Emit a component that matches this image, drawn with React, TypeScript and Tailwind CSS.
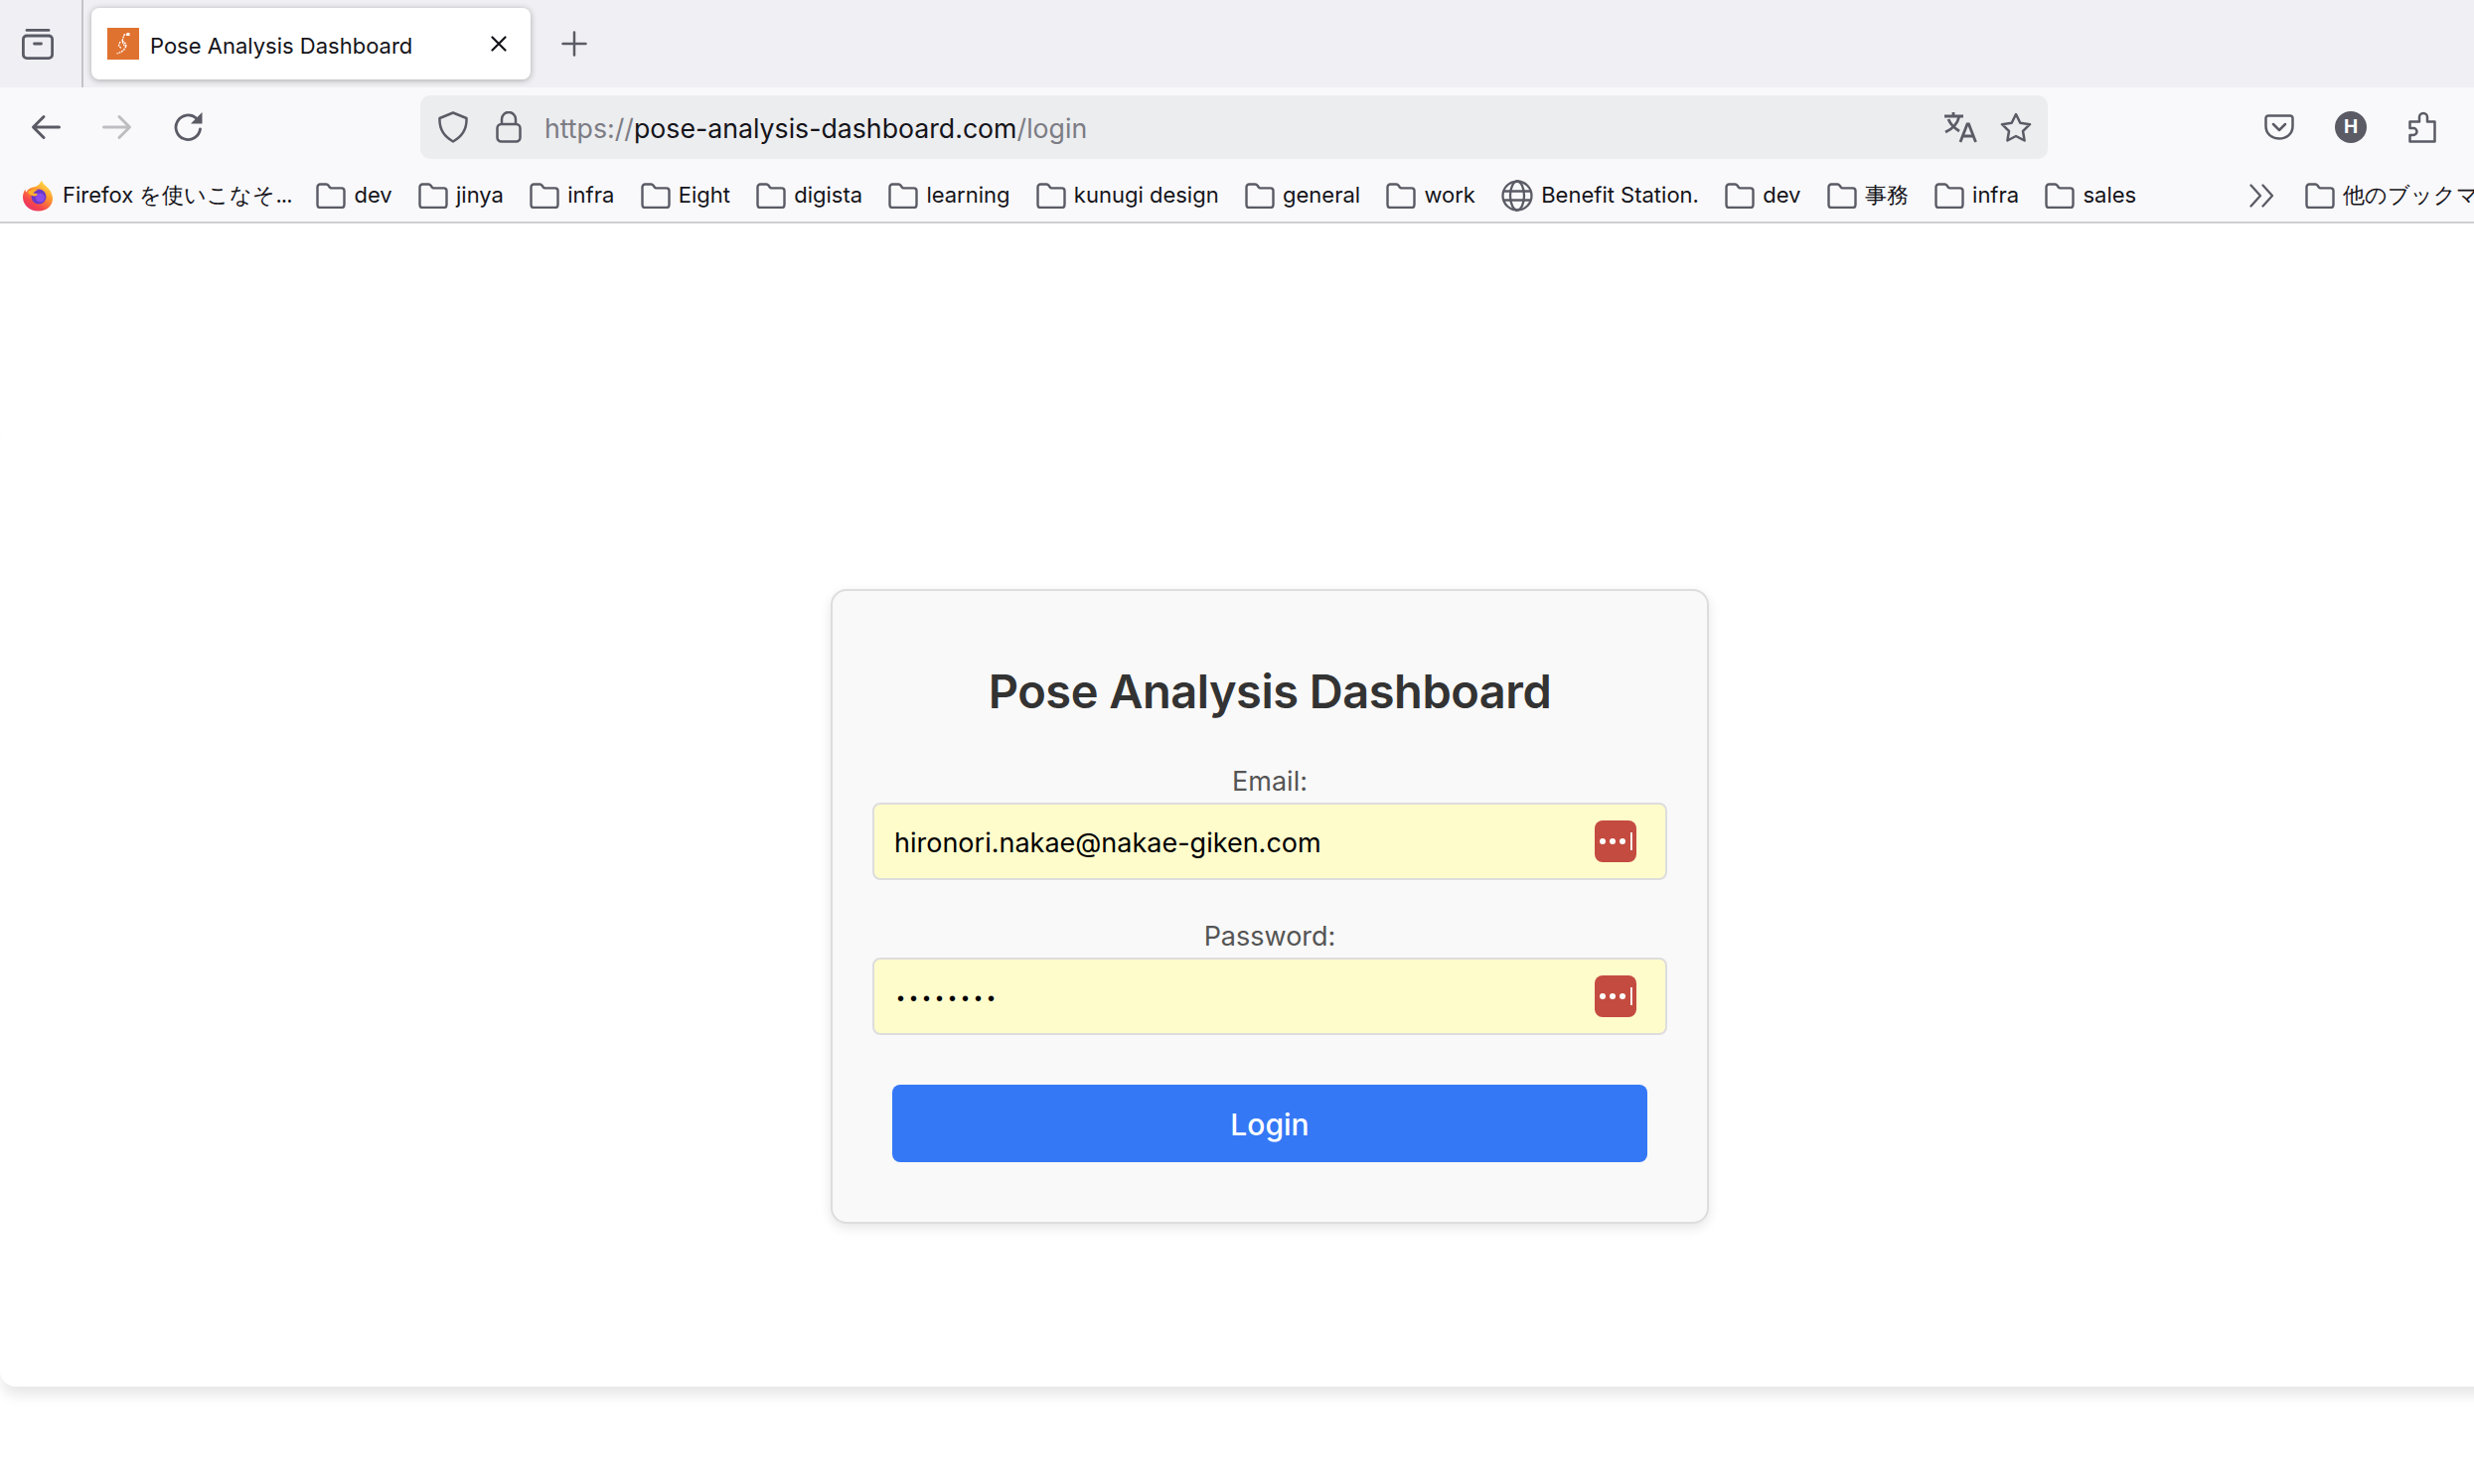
import React from 'react';

const bookmarks = ['dev', 'jinya', 'infra', 'Eight', 'digista', 'learning', 'kunugi design', 'general', 'work'];
const bookmarksAfter = ['dev', '事務', 'infra', 'sales'];

const Folder: React.FC = () => (
  <svg width="30" height="26" viewBox="0 0 30 26" fill="none" stroke="#5b5b66" strokeWidth="2.4" strokeLinejoin="round" className="shrink-0">
    <path d="M1.5 4.2a2.7 2.7 0 0 1 2.7-2.7h6.2c1 0 1.6.5 2.2 1.3l1.2 1.7c.4.6 1 .9 1.7.9h10.300a2.700 2.700 0 0 1 2.700 2.700v14.200a2.700 2.700 0 0 1-2.700 2.700H4.200a2.700 2.700 0 0 1-2.700-2.700z" />
  </svg>
);

const Bookmark: React.FC<{ label: string }> = ({ label }) => (
  <div className="flex items-center gap-[8px]">
    <Folder />
    <span className="whitespace-nowrap">{label}</span>
  </div>
);

const FirefoxLogo: React.FC = () => (
  <svg width="32" height="32" viewBox="0 0 32 32" className="shrink-0">
    <defs>
      <linearGradient id="fx" x1="0.8" y1="0.05" x2="0.2" y2="1">
        <stop offset="0" stopColor="#ffe14d" />
        <stop offset="0.35" stopColor="#ff9a2e" />
        <stop offset="0.75" stopColor="#f5424d" />
        <stop offset="1" stopColor="#e6326e" />
      </linearGradient>
    </defs>
    <path d="M20 1c1 3 4 4.500 6.500 7.500 1.200 1.500 2.500 2.500 2.500 3.500 1.500 3 2 5 2 7 0 7-6 12.500-14.500 12.500C8 31.500 1 25.500 1 17.500c0-3 1-6 2.500-8 0 1.500.5 2.500 1 3 1-2.500 3.500-4.500 6.500-5 3-.5 7-2 8.500-6.500z" fill="url(#fx)" />
    <circle cx="17" cy="17" r="7.500" fill="#6a37c9" />
    <path d="M6 12c3-2 7-2.500 10-1.500-2.500.5-3.500 1.500-4.500 3 3 .5 6 .5 7 .5-1.500 2-5 3-8 2-2.500-.7-4-2-4.500-4z" fill="#ffb02e" />
    <circle cx="18.500" cy="18" r="4.500" fill="#8b4be8" />
  </svg>
);

const KeyIcon: React.FC = () => (
  <svg width="42" height="42" viewBox="0 0 42 42" className="absolute right-[31px] top-[18px]">
    <rect width="42" height="42" rx="8" fill="#c44b3f" />
    <circle cx="8" cy="21" r="3" fill="#fff" />
    <circle cx="18" cy="21" r="3" fill="#fff" />
    <circle cx="28" cy="21" r="3" fill="#fff" />
    <rect x="36" y="12" width="1.800" height="18" fill="#fff" />
  </svg>
);

export default function App() {
  return (
    <div className="w-[2490px] h-[1494px] overflow-hidden bg-white font-['Inter',sans-serif]">
      {/* Tab strip */}
      <div className="h-[88px] bg-[#f0f0f4] flex items-stretch">
        <div className="w-[84px] shrink-0 border-r-2 border-[#c4c4c8] flex items-center pl-[22px]">
          <svg width="32" height="32" viewBox="0 0 32 32" fill="none" stroke="#5b5b66" strokeWidth="2.800" strokeLinecap="round">
            <path d="M5 2.400h22" />
            <rect x="1.400" y="8" width="29.200" height="22.600" rx="3.500" />
            <path d="M12.500 16h7" />
          </svg>
        </div>
        <div className="ml-[8px] mt-[8px] w-[442px] h-[72px] bg-white rounded-[8px] shadow-[0_1px_6px_rgba(0,0,0,0.3)] flex items-center pl-[16px]">
          <svg width="32" height="32" viewBox="0 0 32 32" className="shrink-0">
            <rect width="32" height="32" fill="#e07230" />
            <g fill="none" stroke="#fff" strokeWidth="1.300" strokeDasharray="2 0.800">
              <path d="M21 7h-4l-2 6 1.500 4 2 2-2 3.500-3 2-4 1.500" />
              <path d="M15 13l3.500 3 .5 3" />
              <path d="M13 14l-1.500 4 3 3" />
            </g>
            <rect x="19.500" y="5" width="3" height="3" fill="#fff" />
          </svg>
          <span className="ml-[11px] pt-[4px] text-[22px] text-[#15141a] whitespace-nowrap">Pose Analysis Dashboard</span>
          <svg width="16" height="16" viewBox="0 0 16 16" stroke="#15141a" strokeWidth="2.200" strokeLinecap="round" className="ml-[79px] shrink-0">
            <path d="M1.500 1.500l13 13M14.500 1.500l-13 13" />
          </svg>
        </div>
        <div className="ml-[31px] flex items-center">
          <svg width="26" height="26" viewBox="0 0 26 26" stroke="#5b5b66" strokeWidth="2.500" strokeLinecap="round">
            <path d="M13 1.500v23M1.500 13h23" />
          </svg>
        </div>
      </div>

      {/* Navigation bar */}
      <div className="h-[80px] bg-[#f9f9fb] flex items-center">
        <svg width="30" height="26" viewBox="0 0 30 26" fill="none" stroke="#5b5b66" strokeWidth="3" strokeLinecap="round" strokeLinejoin="round" className="ml-[31px]">
          <path d="M28.500 13H3M13 2.500 2.500 13 13 23.500" />
        </svg>
        <svg width="30" height="26" viewBox="0 0 30 26" fill="none" stroke="#bdbdc2" strokeWidth="3" strokeLinecap="round" strokeLinejoin="round" className="ml-[42px]">
          <path d="M1.500 13H27M17 2.500 27.500 13 17 23.500" />
        </svg>
        <svg width="30" height="30" viewBox="0 0 30 30" fill="none" className="ml-[42px]">
          <path d="M26.500 17a12.300 12.300 0 1 1-4-11" stroke="#5b5b66" strokeWidth="2.800" strokeLinecap="round" />
          <path d="M28.500 0v11.500H17z" fill="#5b5b66" />
        </svg>
        <div className="ml-[218px] w-[1638px] h-[64px] bg-[#ecedef] rounded-[10px] flex items-center shrink-0">
          <svg width="30" height="32" viewBox="0 0 30 32" fill="none" stroke="#5b5b66" strokeWidth="2.500" strokeLinejoin="round" className="ml-[18px]">
            <path d="M15 1.500 28.500 7c.5 10-3.500 18-13.500 23.500C5 25 1 17 1.500 7z" />
          </svg>
          <svg width="26" height="32" viewBox="0 0 26 32" fill="none" stroke="#5b5b66" strokeWidth="2.500" className="ml-[28px]">
            <path d="M6 13V8a7 7 0 0 1 14 0v5" />
            <rect x="1.500" y="13" width="23" height="17.500" rx="4" />
          </svg>
          <span className="ml-[23px] pt-[2px] text-[26.700px] text-[#7c7c84] whitespace-nowrap">
            https://<span className="text-[#15141a]">pose-analysis-dashboard.com</span>/login
          </span>
          <div className="ml-auto flex items-center">
            <svg width="34" height="32" viewBox="0 0 34 32" fill="none" stroke="#5b5b66" strokeWidth="2.800">
              <path d="M1 5h19M10 1v4M16 5C14 13 9 18 2 21M5 8c2 5 6 9 11 12" />
              <path d="M17 31 24 13h1.500L32.500 31M19.500 25h11" />
            </svg>
            <svg width="32" height="30" viewBox="0 0 32 30" fill="none" stroke="#5b5b66" strokeWidth="2.500" strokeLinejoin="round" className="ml-[23px] mr-[16px]">
              <path d="M16 2l4.300 8.700 9.700 1.500-7 6.800 1.600 9.500-8.600-4.500-8.600 4.500 1.600-9.500-7-6.800 9.700-1.500z" />
            </svg>
          </div>
        </div>
        <svg width="30" height="26" viewBox="0 0 30 26" fill="none" stroke="#5b5b66" strokeWidth="2.500" strokeLinecap="round" strokeLinejoin="round" className="ml-[218px]">
          <path d="M4 1.500h22a2.500 2.500 0 0 1 2.500 2.500v8c0 7.500-6 12.500-13.500 12.500S1.500 19.500 1.500 12V4A2.500 2.500 0 0 1 4 1.500z" />
          <path d="M9 10l6 6 6-6" />
        </svg>
        <div className="ml-[41px] w-[32px] h-[32px] rounded-full bg-[#5b5b66] text-white flex items-center justify-center text-[19px] font-bold shrink-0">H</div>
        <svg width="28" height="32" viewBox="0 0 28 32" fill="none" stroke="#5b5b66" strokeWidth="2.500" strokeLinejoin="round" className="ml-[42px]">
          <path d="M1.500 30.500V24h3.500a3.500 3.500 0 0 0 0-7H1.500V10.500H11V6a4 4 0 0 1 8 0v4.500h7.500v20z" />
        </svg>
      </div>

      {/* Bookmarks toolbar */}
      <div className="h-[57px] bg-[#f9f9fb] border-b-2 border-[#cfcfd3] flex items-center text-[22px] text-[#15141a] pt-[2px] whitespace-nowrap">
        <div className="ml-[22px] flex items-center gap-[9px]">
          <FirefoxLogo />
          <span>Firefox を使いこなそ<span className="tracking-[-1px]">...</span></span>
        </div>
        <div className="ml-[25px] flex items-center gap-[26.300px]">
          {bookmarks.map((b, i) => <Bookmark key={i} label={b} />)}
          <div className="flex items-center gap-[8px]">
            <svg width="32" height="32" viewBox="0 0 32 32" fill="none" stroke="#5b5b66" strokeWidth="2.300" className="shrink-0">
              <circle cx="16" cy="16" r="14.500" />
              <ellipse cx="16" cy="16" rx="7" ry="14.500" />
              <path d="M2 11.500h28M2 20.500h28" />
            </svg>
            <span>Benefit Station.</span>
          </div>
          {bookmarksAfter.map((b, i) => <Bookmark key={i} label={b} />)}
        </div>
        <svg width="26" height="24" viewBox="0 0 26 24" fill="none" stroke="#5b5b66" strokeWidth="2.300" strokeLinecap="round" strokeLinejoin="round" className="ml-auto">
          <path d="M1.500 1.500 11 12 1.500 22.500M13.500 1.500 23 12l-9.500 10.500" />
        </svg>
        <div className="ml-[30px] mr-[-40px] w-[210px] shrink-0">
          <Bookmark label="他のブックマーク" />
        </div>
      </div>

      {/* Page */}
      <div className="pt-[202px]">
        <div className="w-[2556px] h-[969px] pt-[2px] bg-white rounded-[16px] shadow-[0_10px_14px_-2px_rgba(0,0,0,0.1)] flex items-center justify-center">
          <div className="w-[884px] h-[639px] bg-[#f9f9f9] border-2 border-[#dddddd] rounded-[16px] shadow-[0_4px_12px_rgba(0,0,0,0.1)] pt-[72px] px-[40px] flex flex-col items-stretch">
            <h1 className="text-[47px] leading-[58px] font-semibold tracking-[-0.5px] text-[#333333] text-center">Pose Analysis Dashboard</h1>
            <label className="mt-[44px] text-[27px] leading-[36px] text-[#555555] text-center">Email:</label>
            <div className="relative mt-[3px]">
              <input
                type="text"
                readOnly
                value="hironori.nakae@nakae-giken.com"
                className="w-full h-[78px] bg-[#fffccc] border-2 border-[#dddddd] rounded-[8px] px-[20px] pt-[2px] text-[27px] text-black outline-none"
              />
              <KeyIcon />
            </div>
            <label className="mt-[39px] text-[27px] leading-[36px] text-[#555555] text-center">Password:</label>
            <div className="relative mt-[3px]">
              <input
                type="password"
                readOnly
                value="password"
                className="w-full h-[78px] bg-[#fffccc] border-2 border-[#dddddd] rounded-[8px] pl-[23px] pr-[20px] pt-[4px] text-[20px] tracking-[6px] text-black outline-none font-['Liberation_Sans',sans-serif]"
              />
              <KeyIcon />
            </div>
            <button className="mt-[50px] mx-auto w-[760px] h-[78px] bg-[#3578f6] rounded-[8px] pt-[2px] text-white text-[30px] font-medium">Login</button>
          </div>
        </div>
      </div>
    </div>
  );
}
